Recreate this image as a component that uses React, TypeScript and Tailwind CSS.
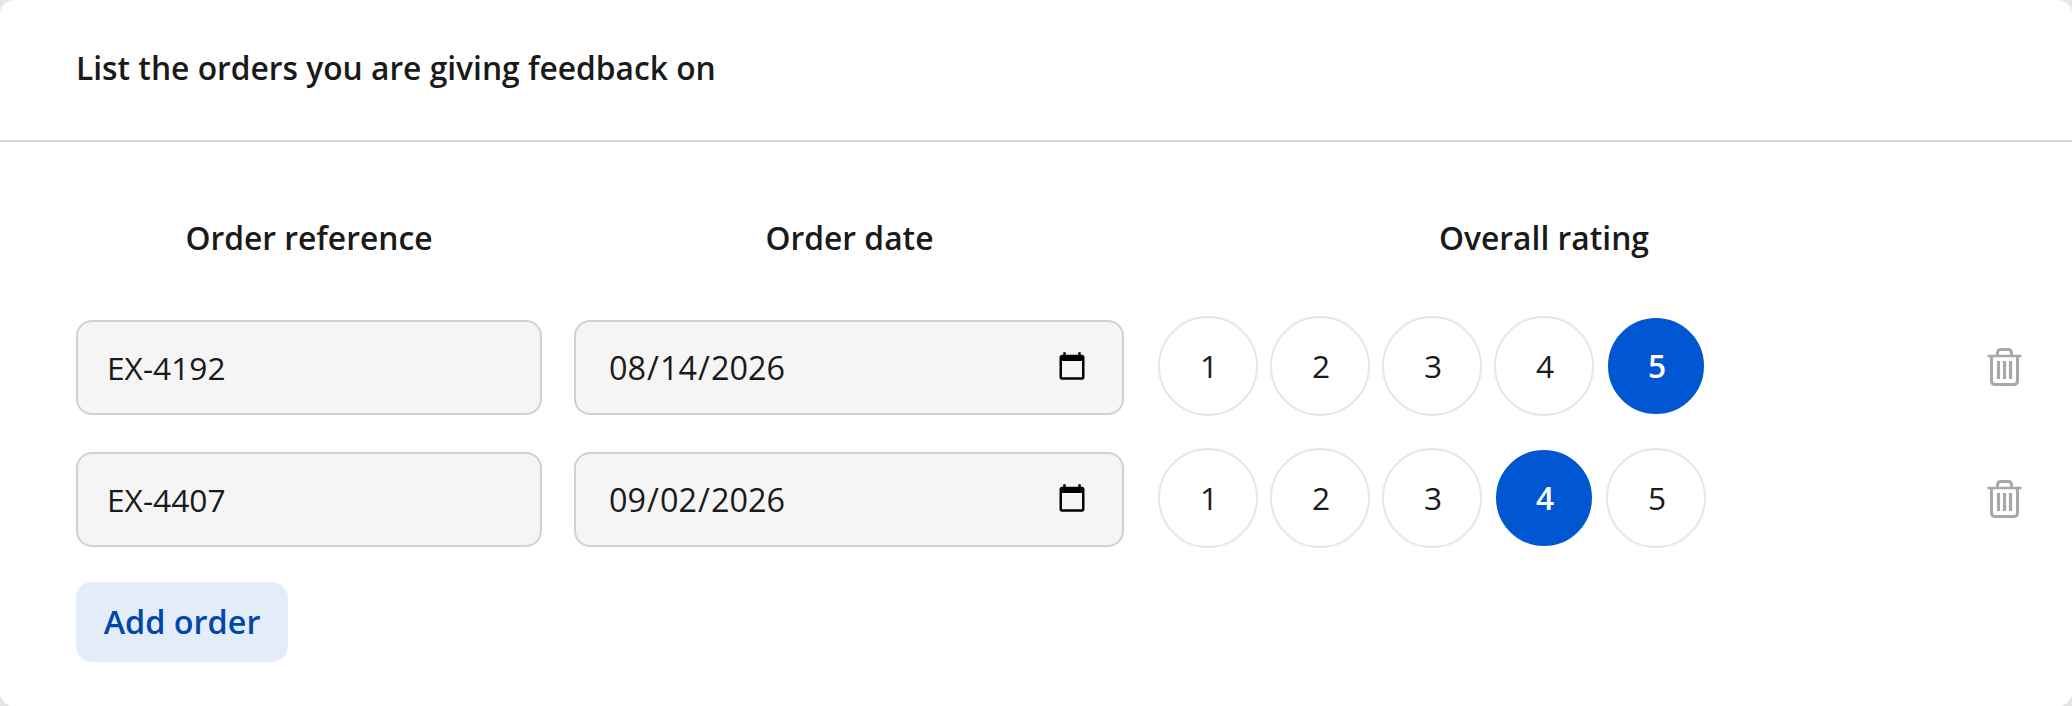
const ratings = [1, 2, 3, 4, 5];

const orders = [
  { reference: 'EX-4192', date: '2026-08-14', rating: 5 },
  { reference: 'EX-4407', date: '2026-09-02', rating: 4 },
];

function TrashIcon() {
  return (
    <svg width="35" height="38" viewBox="0 0 35 38" fill="none" stroke="#a8a8a8" strokeWidth="3">
      <path d="M0.5 8H34.5" strokeWidth="2.4" />
      <path d="M10.5 7.5V4.8C10.5 2.8 12 1.5 14 1.5H21C23 1.5 24.5 2.8 24.5 4.8V7.5" />
      <path d="M4.5 8.5V32.5C4.5 35 6 36.5 8.5 36.5H26.5C29 36.5 30.5 35 30.5 32.5V8.5" />
      <path d="M11.5 13V31M17.5 13V31M23.5 13V31" strokeWidth="3.2" />
    </svg>
  );
}

function RatingButton({ value, selected }: { value: number; selected: boolean }) {
  return (
    <button
      className={
        selected
          ? 'w-[100px] h-[100px] pl-[2px] rounded-full border-2 border-white bg-[#0057d1] text-white font-semibold text-[31.7px]'
          : 'w-[100px] h-[100px] pl-[2px] rounded-full border-2 border-[#e6e6e6] bg-white text-[#1a1a1a] text-[31.7px]'
      }
    >
      {value}
    </button>
  );
}

export default function App() {
  return (
    <div className="w-[2072px] h-[706px] bg-[#e4e4e4] font-['Open_Sans',sans-serif] text-[#1a1a1a] overflow-hidden">
      <div className="h-[706px] rounded-[14px] bg-white">
        <div className="h-[142px] border-b-2 border-[#d4d4d4] pl-[76px] pb-[4px] flex items-center">
          <h2 className="text-[31.75px] font-semibold">List the orders you are giving feedback on</h2>
        </div>

        <div className="pl-[76px]">
          <div className="grid grid-cols-[465px_551px_772px_82px] gap-x-[33px] h-[174px] items-center pt-[17px]">
            <div className="pl-[1px] text-center text-[31.8px] font-semibold">Order reference</div>
            <div className="text-center text-[31.8px] font-semibold">Order date</div>
            <div className="text-center text-[31.8px] font-semibold">Overall rating</div>
            <div />
          </div>

          <div className="flex flex-col gap-y-[32px]">
            {orders.map((order) => (
              <div key={order.reference} className="grid grid-cols-[465px_551px_772px_82px] gap-x-[33px] items-start h-[100px]">
                <input
                  defaultValue={order.reference}
                  className="mt-[4px] h-[95px] w-[466px] rounded-[16px] border-2 border-[#d1d1d1] bg-[#f5f5f5] px-[29px] text-[31.7px] text-[#1a1a1a] outline-none"
                />
                <input
                  type="date"
                  defaultValue={order.date}
                  className="mt-[4px] h-[95px] w-[550px] rounded-[16px] border-2 border-[#d1d1d1] bg-[#f5f5f5] px-[32px] text-[32.4px] text-[#1a1a1a] outline-none"
                />
                <div className="flex gap-x-[12px]">
                  {ratings.map((r) => (
                    <RatingButton key={r} value={r} selected={r === order.rating} />
                  ))}
                </div>
                <div className="flex justify-center h-[100px] items-center pt-[1px]">
                  <TrashIcon />
                </div>
              </div>
            ))}
          </div>

          <button className="mt-[34px] h-[80px] w-[212px] pb-[2px] rounded-[16px] bg-[#e3edfa] text-[#0047ab] text-[32.4px] font-semibold">
            Add order
          </button>
        </div>
      </div>
    </div>
  );
}
